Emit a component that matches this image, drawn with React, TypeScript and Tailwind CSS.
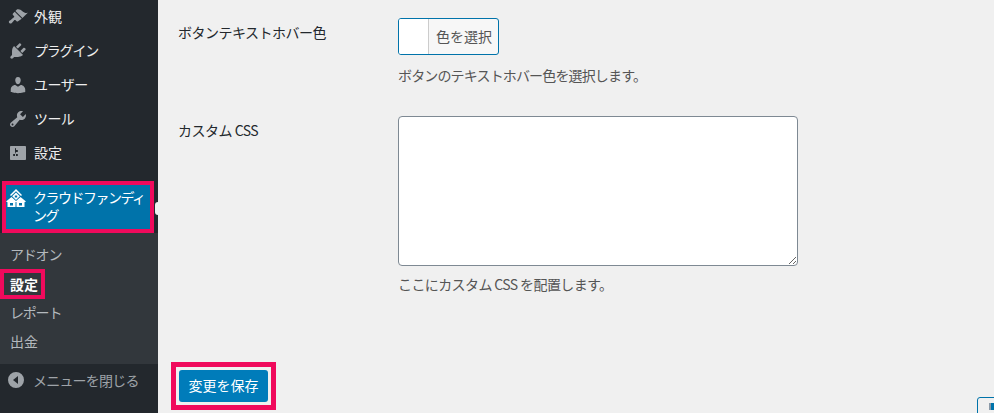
const FONT = 'font-["Noto_Sans_CJK_JP","Liberation_Sans",sans-serif]';

const menuItems = [
  {
    label: '外観',
    tracking: 'tracking-normal',
    d: 'M14.48 11.06L7.41 3.99l1.5-1.5c.5-.56 2.3-.47 3.51.32 1.21.8 1.43 1.28 2.91 2.1 1.18.64 2.45 1.26 4.45.85zm-.71.71L6.7 4.7 4.93 6.47c-.39.39-.39 1.02 0 1.41l1.06 1.06c.39.39.39 1.03 0 1.42-.6.6-1.43 1.11-2.21 1.69-.35.26-.7.53-1.01.84C1.43 13.23.5 14.43.96 15.53c.17.42.52.79 1.02.98.98.38 1.82-.42 2.5-1.3.55-.73 1.27-1.63 1.67-2.02.39-.4 1.02-.4 1.41 0l1.06 1.06c.39.39 1.03.39 1.42 0z',
  },
  {
    label: 'プラグイン',
    tracking: 'tracking-[-1.2px]',
    d: 'M13.11 4.36L9.87 7.6 8 5.73l3.24-3.24c.35-.34 1.05-.2 1.56.32.52.51.66 1.21.31 1.55zm-8 1.77l.91-1.12 9.01 9.01-1.19.84c-.71.71-2.63 1.16-3.82 1.16H6.14L4.9 17.26c-.59.59-1.54.59-2.12 0-.59-.58-.59-1.53 0-2.12l1.24-1.24v-3.88c0-1.13.4-3.19 1.09-3.89zm7.26 3.97l3.24-3.24c.34-.35 1.04-.21 1.55.31.52.51.66 1.21.31 1.55l-3.24 3.25z',
  },
  {
    label: 'ユーザー',
    tracking: 'tracking-[-0.5px]',
    d: 'M10 9.25c-2.27 0-2.73-3.44-2.73-3.44C7 4.02 7.82 2 9.97 2c2.16 0 2.98 2.02 2.71 3.81 0 0-.41 3.44-2.68 3.44zm0 2.57L12.72 10c2.39 0 4.52 2.33 4.52 4.53v2.49s-3.65 1.13-7.24 1.13c-3.65 0-7.24-1.13-7.24-1.13v-2.49c0-2.25 1.94-4.48 4.47-4.48z',
  },
  {
    label: 'ツール',
    tracking: 'tracking-[-0.6px]',
    d: 'M16.68 9.77c-1.34 1.34-3.3 1.67-4.95.99l-5.41 6.52c-.99.99-2.59.99-3.58 0s-.99-2.59 0-3.57l6.52-5.42c-.68-1.65-.35-3.61.99-4.95 1.28-1.28 3.12-1.62 4.72-1.06l-2.89 2.89 2.82 2.82 2.86-2.87c.53 1.58.18 3.39-1.08 4.65zM3.81 16.21c.4.39 1.04.39 1.43 0 .4-.4.4-1.04 0-1.43-.39-.4-1.03-.4-1.43 0-.39.39-.39 1.03 0 1.43z',
  },
  {
    label: '設定',
    tracking: 'tracking-normal',
    d: 'M18 16V4c0-.55-.45-1-1-1H3c-.55 0-1 .45-1 1v12c0 .55.45 1 1 1h14c.55 0 1-.45 1-1zM8 11h1c.55 0 1 .45 1 1s-.45 1-1 1H8v1.5c0 .28-.22.5-.5.5s-.5-.22-.5-.5V13H6c-.55 0-1-.45-1-1s.45-1 1-1h1V5.5c0-.28.22-.5.5-.5s.5.22.5.5V7h1c.55 0 1 .45 1 1s-.45 1-1 1h-1v5.5c0 .28-.22.5-.5.5s-.5-.22-.5-.5V9z',
  },
];

function Dash({ d }: { d: string }) {
  return (
    <svg width="20" height="20" viewBox="0 0 20 20" fill="#9ea3a8" className="shrink-0">
      <path d={d} />
    </svg>
  );
}

function HouseIcon() {
  return (
    <svg width="20" height="18" viewBox="0 0 20 18" fill="#fff" className="mt-[4px] shrink-0">
      <path d="M10 0l6 6-1 1-5-4.800L5 7 4 6z" />
      <path d="M10 3.600l3.800 3.700L10 11 6.200 7.300z" />
      <path d="M5.500 8l5 4.500-1 .8v4.700H1.500v-4.700L0 12.500z" />
      <path d="M14.500 8l5.500 4.500-1.500.8v4.700h-8v-4.700l-1-.8z" />
      <rect x="8.800" y="6.500" width="2.400" height="2" fill="#0073aa" />
      <rect x="4" y="14" width="3" height="2.500" fill="#0073aa" />
      <rect x="13" y="14" width="3" height="2.500" fill="#0073aa" />
    </svg>
  );
}

function Sidebar() {
  return (
    <aside className="flex h-[413px] w-[158px] shrink-0 flex-col bg-[#23282d]">
      {menuItems.map((item) => (
        <div key={item.label} className="flex h-[34px] shrink-0 items-center gap-[6px] pl-[8px] text-[14px] text-[#eeeeee]">
          <Dash d={item.d} />
          <span className={`pb-[2px] ${item.tracking}`}>{item.label}</span>
        </div>
      ))}

      <div className="relative ml-[2px] mt-[11px] h-[52px] w-[152px] shrink-0 border-[4px] border-[#f00a5c] bg-[#0073aa]">
        <div className="flex h-full items-start gap-[7px] text-[14px] leading-[18px] tracking-[-1.5px] text-white">
          <HouseIcon />
          <span className="w-[118px] pt-[3px]">クラウドファンディング</span>
        </div>
      </div>
      <div className="relative h-0">
        <div className="absolute left-[155px] top-[-31px] h-[13px] w-[3px] rounded-l-full bg-[#f1f1f1]" />
      </div>

      <div className="flex h-[131px] shrink-0 flex-col bg-[#32373c] text-[14px] text-[#b4b9be]">
        <div className="mt-[7px] flex h-[29px] items-center pl-[10px] tracking-[-1.200px]">アドオン</div>
        <div className="flex h-[30px] w-[45px] items-center border-[4px] border-[#f00a5c] pl-[6px] font-bold text-white">設定</div>
        <div className="flex h-[29px] items-center pb-[2px] pl-[10px] tracking-[-1.200px]">レポート</div>
        <div className="flex h-[29px] items-center pb-[2px] pl-[10px]">出金</div>
      </div>

      <div className="flex flex-1 items-center gap-[10px] pb-[17px] pl-[8px] text-[14px] tracking-[-0.8px] text-[#9ea3a8]">
        <svg width="16" height="16" viewBox="0 0 16 16" fill="#9ea3a8" className="shrink-0">
          <path d="M16 8A8 8 0 1 0 0 8a8 8 0 0 0 16 0zm-6-4v8L5 8z" />
        </svg>
        <span className="ml-[-1px]">メニューを閉じる</span>
      </div>
    </aside>
  );
}

export default function App() {
  return (
    <div className={`relative flex h-[413px] w-[994px] overflow-hidden bg-[#f0f0f0] text-[#444] ${FONT}`}>
      <Sidebar />
      <main className="flex min-w-0 flex-1 flex-col pl-[20px]">
        <div className="flex pt-[18px]">
          <label className="w-[220px] pt-[3px] text-[14px] font-normal leading-[22px] tracking-[-0.5px] text-[#23282d]">ボタンテキストホバー色</label>
          <div>
            <button type="button" className="flex h-[37px] w-[101px] overflow-hidden rounded-[3px] border border-[#0073aa] bg-[#f7f7f7] text-[14px] text-[#555]">
              <span className="h-full w-[30px] border-r border-[#ccc] bg-white" />
              <span className="flex h-full flex-1 items-center pb-[1px] pl-[7px]">色を選択</span>
            </button>
            <p className="mt-[10px] text-[14px] leading-[20px] tracking-[-0.85px] text-[#555]">ボタンのテキストホバー色を選択します。</p>
          </div>
        </div>

        <div className="mt-[31px] flex">
          <label className="w-[220px] pt-[3px] text-[14px] font-normal leading-[22px] tracking-[-0.5px] text-[#23282d]">カスタム CSS</label>
          <div>
            <textarea className="block h-[150px] w-[400px] rounded-[4px] border border-[#7e8993] bg-white" />
            <p className="mt-[8px] text-[14px] leading-[20px] tracking-[-0.6px] text-[#555]">ここにカスタム CSS を配置します。</p>
          </div>
        </div>

        <div className="ml-[-7px] mt-[68px] w-[105px] border-[5px] border-[#f00a5c] p-[3px]">
          <button type="button" className="h-[32px] w-full rounded-[3px] bg-[#007cba] pb-[1px] text-[14px] text-white">変更を保存</button>
        </div>
      </main>
      <div className="absolute left-[977px] top-[397px] flex h-[30px] w-[40px] rounded-[3px] border border-[#0073aa] bg-[#f0f0f0] pl-[11px] pt-[5px]">
        <div className="h-[7px] w-[2px] bg-[#8a99a8]" />
        <div className="h-[7px] w-[4px] bg-[#0073aa]" />
      </div>
    </div>
  );
}
